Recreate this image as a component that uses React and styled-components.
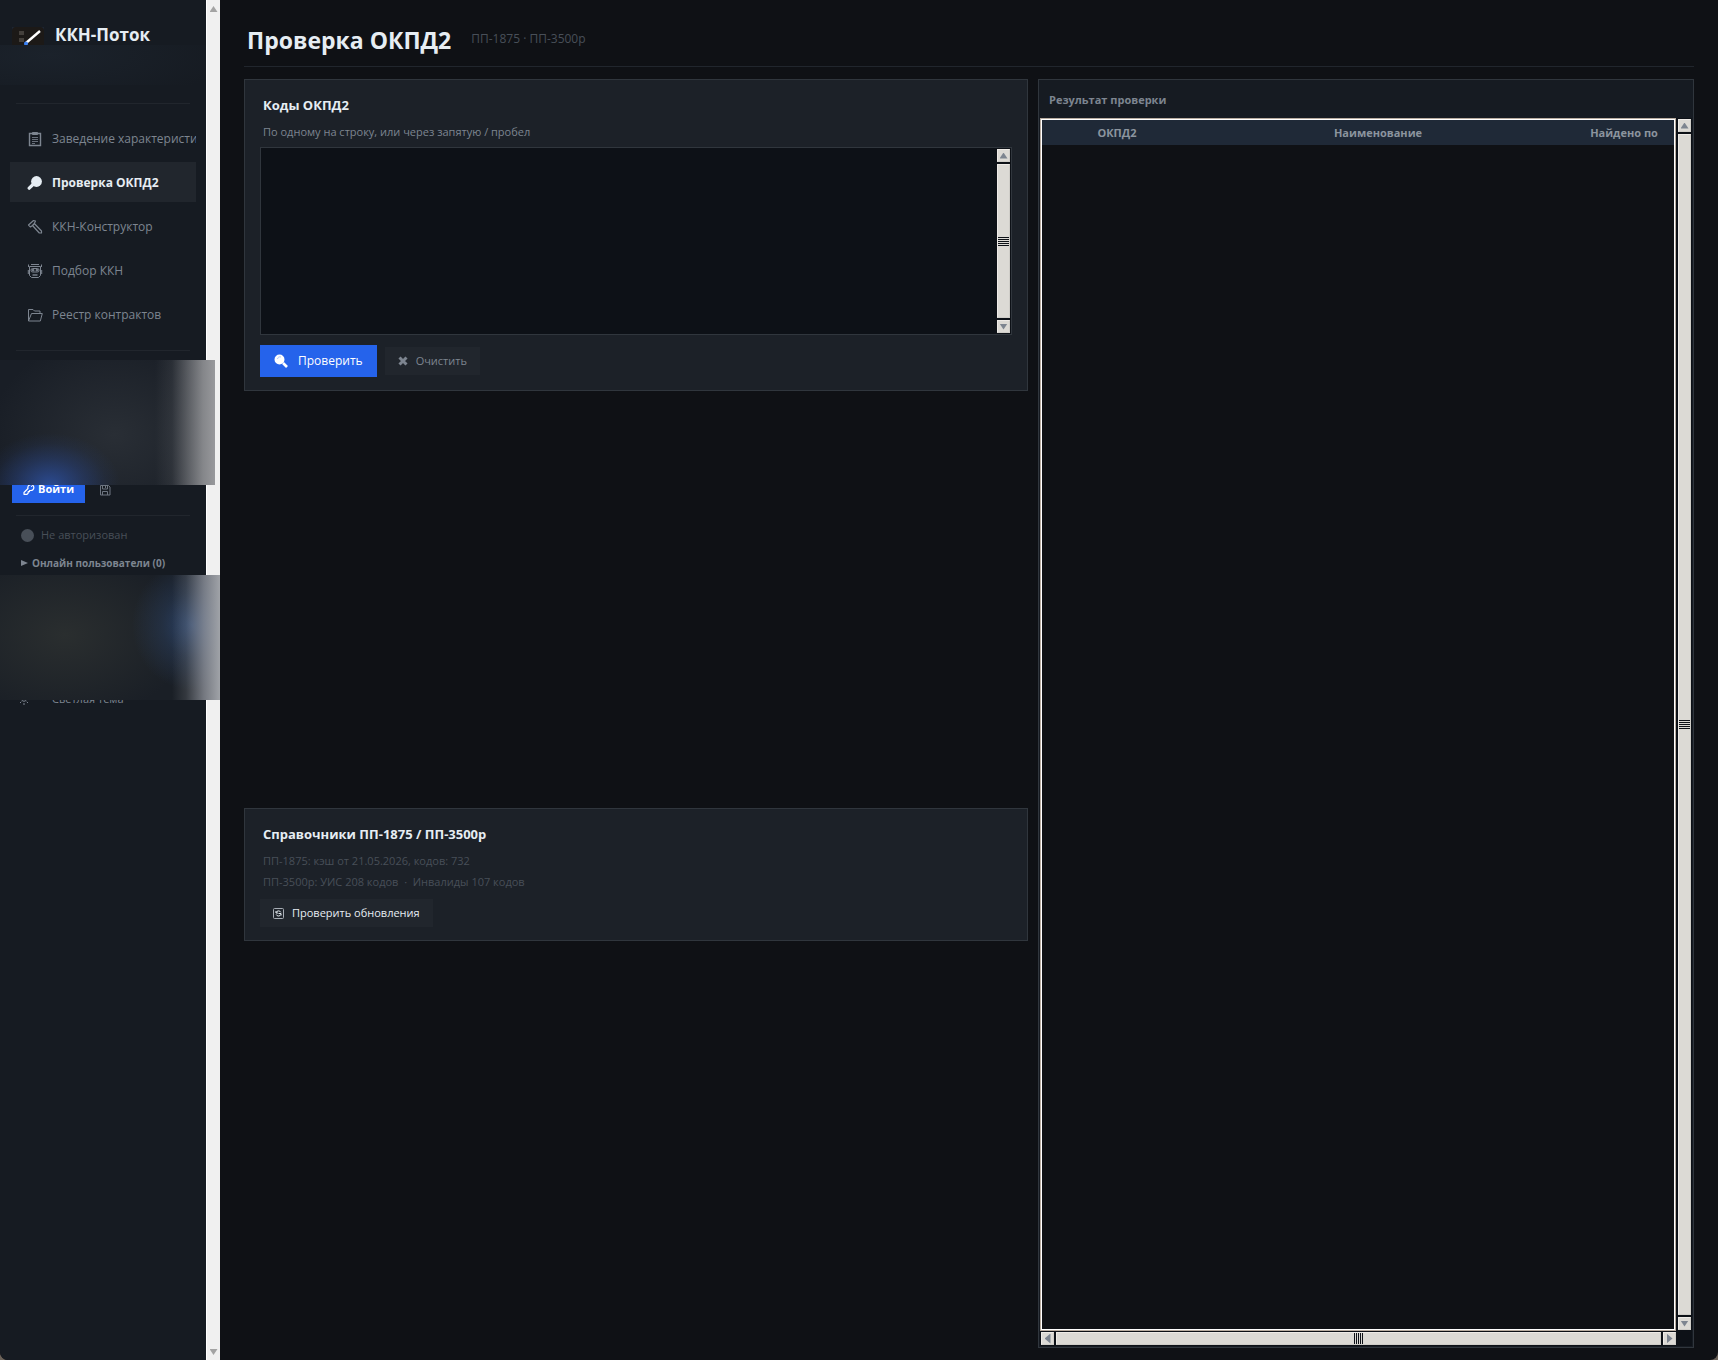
import React, { useState } from 'react'
import styled, { createGlobalStyle, css } from 'styled-components'

const NAV = [
  { id: 'intro', label: 'Заведение характеристик', icon: ClipboardIcon },
  { id: 'okpd', label: 'Проверка ОКПД2', icon: LensIcon },
  { id: 'builder', label: 'ККН-Конструктор', icon: HammerIcon },
  { id: 'pick', label: 'Подбор ККН', icon: RobotIcon },
  { id: 'registry', label: 'Реестр контрактов', icon: FolderIcon },
]

function App() {
  const [page, setPage] = useState('okpd')
  const [codes, setCodes] = useState('')

  return (
    <>
      <GlobalStyle />
      <Window>
        <Sidebar>
          <SidebarContent>
            <Brand>
              <LogoIcon />
              <BrandName>ККН-Поток</BrandName>
              <BrandHaze />
            </Brand>
            <Rule />
            <Nav>
              {NAV.map(({ id, label, icon: Icon }) => (
                <NavItem key={id} $active={page === id} onClick={() => setPage(id)}>
                  <Icon />
                  <span>{label}</span>
                </NavItem>
              ))}
            </Nav>
            <Rule />
            <Account>
              <AccountHaze />
              <LoginRow>
                <LoginButton>
                  <KeyIcon />
                  Войти
                </LoginButton>
                <SaveButton aria-label="Сохранить">
                  <FloppyIcon />
                </SaveButton>
              </LoginRow>
            </Account>
            <Rule />
            <Status>
              <Dot />
              Не авторизован
            </Status>
            <OnlineToggle>
              <PlayIcon />
              Онлайн пользователи (0)
            </OnlineToggle>
            <Footer>
              <FooterHaze />
              <ThemeButton>
                <SunIcon />
                <span>Светлая тема</span>
              </ThemeButton>
            </Footer>
          </SidebarContent>
          <SidebarScroll>
            <Arrow $dir="up" />
            <Arrow $dir="down" />
          </SidebarScroll>
        </Sidebar>

        <Main>
          <Header>
            <Title>Проверка ОКПД2</Title>
            <Subtitle>ПП-1875 · ПП-3500р</Subtitle>
          </Header>
          <Columns>
            <LeftColumn>
              <Cell>
                <Card>
                  <CardTitle as="label" htmlFor="codes">Коды ОКПД2</CardTitle>
                  <Hint>По одному на строку, или через запятую / пробел</Hint>
                  <Editor>
                    <CodesInput id="codes" value={codes} onChange={(e) => setCodes(e.target.value)} />
                    <ScrollBar />
                  </Editor>
                  <Actions>
                    <PrimaryButton>
                      <SearchIcon />
                      Проверить
                    </PrimaryButton>
                    <GhostButton $muted onClick={() => setCodes('')}>
                      <CrossIcon />
                      Очистить
                    </GhostButton>
                  </Actions>
                </Card>
              </Cell>
              <Cell>
                <Card>
                  <CardTitle>Справочники ПП-1875 / ПП-3500р</CardTitle>
                  <Info>ПП-1875: кэш от 21.05.2026, кодов: 732</Info>
                  <Info>ПП-3500р: УИС 208 кодов &nbsp;·&nbsp; Инвалиды 107 кодов</Info>
                  <UpdateRow>
                    <GhostButton>
                      <RefreshIcon />
                      Проверить обновления
                    </GhostButton>
                  </UpdateRow>
                </Card>
              </Cell>
            </LeftColumn>

            <Results>
              <ResultsTitle>Результат проверки</ResultsTitle>
              <ResultsGrid>
                <TableFrame>
                  <Table>
                    <thead>
                      <tr>
                        <Th $width="150px">ОКПД2</Th>
                        <Th>Наименование</Th>
                        <Th $width="110px" $inset="10px">Найдено по</Th>
                      </tr>
                    </thead>
                    <tbody />
                  </Table>
                </TableFrame>
                <ScrollBar />
                <ScrollBar $horizontal />
              </ResultsGrid>
            </Results>
          </Columns>
        </Main>
      </Window>
    </>
  )
}

export default App

function ScrollBar({ $horizontal }) {
  return (
    <Track $horizontal={$horizontal}>
      <ScrollButton>
        <Arrow $dir={$horizontal ? 'left' : 'up'} $color="#7d8590" />
      </ScrollButton>
      <Thumb>
        <Grip $horizontal={$horizontal} />
      </Thumb>
      <ScrollButton>
        <Arrow $dir={$horizontal ? 'right' : 'down'} $color="#7d8590" />
      </ScrollButton>
    </Track>
  )
}

// Icons
function LogoIcon() {
  return (
    <svg width="32" height="18" viewBox="0 0 32 18">
      <rect width="32" height="18" fill="#1d2533" />
      <path d="M4 0h24a4 4 0 0 1 4 4v14H0V4a4 4 0 0 1 4-4z" fill="#1c1917" />
      <path d="M7 4h5v4H7zM7 11h5v4H7z" fill="#44403c" />
      <path d="M14 16 28 4" stroke="#fff" strokeWidth="2.4" />
      <circle cx="14" cy="16.5" r="2" fill="#3b82f6" />
    </svg>
  )
}

function ClipboardIcon() {
  return (
    <svg width="16" height="16" viewBox="0 0 16 16" fill="none" stroke="currentColor">
      <path d="M2.5 2.5h11v12h-11z" strokeWidth="1.4" />
      <path d="M5.5 1.5h5v2h-5z" fill="currentColor" />
      <path d="M5 6.5h6M5 8.5h6M5 10.5h6M5 12.5h3" strokeWidth=".8" />
    </svg>
  )
}

function LensIcon() {
  return (
    <svg width="16" height="16" viewBox="0 0 16 16" fill="currentColor">
      <circle cx="9.500" cy="6.500" r="5.400" />
      <path d="m5.500 10-3.300 3.200" stroke="currentColor" strokeWidth="3.200" strokeLinecap="round" />
    </svg>
  )
}

function HammerIcon() {
  return (
    <svg width="16" height="16" viewBox="0 0 16 16" fill="none" stroke="currentColor" strokeWidth="1.2" strokeLinejoin="round">
      <path d="M1.500 6 6.500 1.500l2 .5-1.200 2.500L14.500 12v2h-2.200L5.500 6.500 3.500 8z" />
      <path d="m5.500 6.500 2-2" />
    </svg>
  )
}

function RobotIcon() {
  return (
    <svg width="16" height="16" viewBox="0 0 16 16" fill="none" stroke="currentColor">
      <path d="M2.500 3.500h11v9l-2 2h-7l-2-2zM1.500 1.500v2.500M14.500 1.500v2.500M4 1.500h8M1.300 7v4M14.700 7v4" />
      <rect x="4" y="5.500" width="8" height="3.500" rx="1.500" />
      <circle cx="6" cy="7.200" r=".9" fill="currentColor" />
      <circle cx="10" cy="7.200" r=".9" fill="currentColor" />
      <path d="M5.500 12h5" strokeWidth="1.400" />
    </svg>
  )
}

function FolderIcon() {
  return (
    <svg width="16" height="16" viewBox="0 0 16 16" fill="none" stroke="currentColor" strokeLinejoin="round">
      <path d="M1.500 14V2.500h4.500L7.500 4H13v2.500M1.500 14 4.500 6.500H15.300L13.300 14z" />
    </svg>
  )
}

function KeyIcon() {
  return (
    <svg width="12" height="12" viewBox="0 0 12 12" fill="none" stroke="currentColor" strokeWidth="1.2" strokeLinejoin="round">
      <path d="M5 5.500A3 3 0 1 1 7.500 7.500L6.500 7.500v1.200H5.200V10L4 11.300H1V9.500z" />
      <circle cx="8.600" cy="3.500" r=".6" fill="currentColor" stroke="none" />
    </svg>
  )
}

function FloppyIcon() {
  return (
    <svg width="12" height="12" viewBox="0 0 12 12" fill="none" stroke="currentColor">
      <path d="M1.500 1.500h8l1.500 1.500v8H1.500zM3.500 1.500V5h5V1.500M3.500 11V7.500h5V11M6.500 2v2" />
    </svg>
  )
}

function PlayIcon() {
  return (
    <svg width="7" height="8" viewBox="0 0 7 8" fill="currentColor">
      <path d="M0 1v6l7-3z" />
    </svg>
  )
}

function SunIcon() {
  return (
    <svg width="12" height="12" viewBox="0 0 12 12" fill="none" stroke="currentColor">
      <circle cx="6" cy="6" r="2.300" />
      <path d="M6 0v2M6 10v2M0 6h2M10 6h2M2 2l1.300 1.300M8.700 8.700 10 10M2 10l1.300-1.300M8.700 3.300 10 2" />
    </svg>
  )
}

function SearchIcon() {
  return (
    <svg width="14" height="14" viewBox="0 0 14 14" fill="none" stroke="currentColor">
      <circle cx="5.500" cy="5.500" r="4" fill="currentColor" strokeWidth="2" />
      <path d="M3.500 5A2.500 2.500 0 0 1 7 3" stroke="#9dbcf8" strokeWidth=".8" />
      <path d="m9 9 4 4" strokeWidth="2.600" />
    </svg>
  )
}

function CrossIcon() {
  return (
    <svg width="10" height="10" viewBox="0 0 10 10" stroke="currentColor" strokeWidth="3">
      <path d="m1.500 1.500 7 7M8.500 1.500l-7 7" />
    </svg>
  )
}

function RefreshIcon() {
  return (
    <svg width="11" height="11" viewBox="0 0 11 11" fill="none" stroke="currentColor">
      <rect x=".5" y=".5" width="10" height="10" rx="1" stroke="#a8aeb6" />
      <path d="M7.800 4.300A2.500 2.500 0 0 0 3.200 4.500M3.200 6.500a2.500 2.500 0 0 0 4.600 0M5.500 5.500h2.500v2M3 3v2h2" />
    </svg>
  )
}

const GlobalStyle = createGlobalStyle`
    * {
      box-sizing: border-box;
    }

    body {
      margin: 0;
      background: #6b6259;
      font-family: "Open Sans", "Noto Sans", sans-serif;
      font-size: 12px;
      line-height: 16px;
      color: #e6edf3;
    }

    button, textarea {
      font: inherit;
      color: inherit;
      border: none;
    }

    button {
      display: flex;
      align-items: center;
      cursor: pointer;
      white-space: nowrap;
    }

    svg {
      flex: none;
    }
`

const Window = styled.div`
    display: flex;
    min-height: 100vh;
    background: #0f1115;
    border-radius: 0 0 8px 8px;
    overflow: hidden;
`

const Sidebar = styled.aside`
    display: flex;
    flex: none;
    width: 220px;
    background: #161b22;
`

const SidebarContent = styled.div`
    flex: 1;
    min-width: 0;
`

const SidebarScroll = styled.div`
    display: flex;
    flex-direction: column;
    justify-content: space-between;
    align-items: center;
    width: 14px;
    padding: 6px 0 5px;
    background: #f0f0f0;
    border-left: 1px solid white;
`

const Arrow = styled.span`
    width: 8px;
    height: 6px;
    background: ${(p) => p.$color || '#a3a3a3'};
    ${(p) => p.$dir === 'up' && css`clip-path: polygon(50% 0, 100% 100%, 0 100%);`}
    ${(p) => p.$dir === 'down' && css`clip-path: polygon(0 0, 100% 0, 50% 100%);`}
    ${(p) => p.$dir === 'left' && css`
      width: 6px;
      height: 10px;
      clip-path: polygon(0 50%, 100% 0, 100% 100%);
    `}
    ${(p) => p.$dir === 'right' && css`
      width: 6px;
      height: 10px;
      clip-path: polygon(0 0, 100% 50%, 0 100%);
    `}
`

const Brand = styled.div`
    position: relative;
    display: flex;
    align-items: flex-start;
    gap: 11px;
    height: 103px;
    padding: 27px 12px 0;
`

const BrandName = styled.div`
    font-size: 17px;
    font-weight: 700;
    line-height: 16px;
`

const Haze = styled.div`
    position: absolute;
    left: 0;
    z-index: 1;
`

const BrandHaze = styled(Haze)`
    top: 45px;
    width: 206px;
    height: 40px;
    background: radial-gradient(ellipse 180px 50px at 50px 10px, #1b222b, #161b22);
`

const AccountHaze = styled(Haze)`
    top: 9px;
    width: 215px;
    height: 125px;
    background:
      linear-gradient(to right, transparent 155px, rgba(151, 152, 155, 0.12) 172px, rgba(151, 152, 155, 0.55) 190px, rgba(151, 152, 155, 0.85) 203px, #98999c 215px),
      radial-gradient(ellipse 70px 52px at 50px 125px, #2b4a90, rgba(42, 70, 136, 0.45) 50%, rgba(42, 70, 136, 0.12) 80%, transparent),
      radial-gradient(ellipse 125px 100px at 115px 75px, #292e35, #191e26);
`

const FooterHaze = styled(Haze)`
    top: 0;
    width: 220px;
    height: 125px;
    background:
      linear-gradient(to right, transparent 172px, rgba(155, 158, 163, 0.2) 186px, rgba(155, 158, 166, 0.7) 204px, #a0a3a8 220px),
      radial-gradient(ellipse 60px 65px at 192px 50px, #2c4368, rgba(44, 67, 104, 0.4) 50%, transparent),
      radial-gradient(ellipse 125px 85px at 65px 60px, #2a2e2f, #1a1f26);
`

const Rule = styled.hr`
    height: 1px;
    margin: 0 16px;
    border: none;
    background: #21262d;
`

const Nav = styled.nav`
    display: flex;
    flex-direction: column;
    gap: 4px;
    padding: 14px 10px 16px;
`

const NavItem = styled.button`
    gap: 9px;
    height: 40px;
    padding: 1px 0 0 17px;
    overflow: hidden;
    background: ${(p) => (p.$active ? '#21262d' : 'transparent')};
    color: ${(p) => (p.$active ? '#e6edf3' : '#7d8590')};
    font-weight: ${(p) => (p.$active ? 700 : 400)};
`

const Account = styled.div`
    position: relative;
    height: 164px;
    padding: 124px 12px 0;
`

const LoginRow = styled.div`
    display: flex;
    gap: 14px;
`

const LoginButton = styled.button`
    gap: 3px;
    height: 28px;
    padding: 0 11px;
    background: #2563eb;
    color: white;
    font-size: 11px;
    font-weight: 700;
`

const SaveButton = styled.button`
    height: 28px;
    padding: 2px 0 0;
    background: transparent;
    color: #6e7681;
`

const Status = styled.div`
    display: flex;
    align-items: center;
    gap: 7px;
    padding: 11px 0 0 21px;
    color: #484f58;
    font-size: 11px;
`

const Dot = styled.span`
    width: 13px;
    height: 13px;
    border-radius: 50%;
    background: #484f58;
`

const OnlineToggle = styled.button`
    gap: 4px;
    height: 32px;
    padding: 8px 0 0 21px;
    background: transparent;
    color: #7d8590;
    font-size: 10px;
    font-weight: 700;
`

const Footer = styled.div`
    position: relative;
    padding-top: 116px;
`

const ThemeButton = styled.button`
    gap: 22px;
    height: 16px;
    padding: 0 0 0 18px;
    background: transparent;
    color: #7d8590;
    font-size: 11px;
`

const Main = styled.main`
    display: flex;
    flex-direction: column;
    flex: 1;
    min-width: 0;
    padding: 0 24px 12px;
`

const Header = styled.header`
    display: flex;
    align-items: center;
    gap: 20px;
    height: 67px;
    margin-bottom: 12px;
    padding: 14px 3px 0;
    border-bottom: 1px solid #21262d;
`

const Title = styled.h1`
    margin: 0;
    font-size: 23px;
    font-weight: 700;
    line-height: 32px;
`

const Subtitle = styled.span`
    padding-bottom: 2px;
    color: #484f58;
`

const Columns = styled.div`
    display: grid;
    grid-template-columns: 784fr 656fr;
    gap: 10px;
    flex: 1;
`

const LeftColumn = styled.div`
    display: flex;
    flex-direction: column;
    gap: 10px;
`

// spare height is shared equally between the two cells
const Cell = styled.div`
    flex: 1 1 auto;
`

const Card = styled.section`
    display: flex;
    flex-direction: column;
    padding: 17px 15px 13px;
    background: #1c2128;
    border: 1px solid #30363d;
`

const CardTitle = styled.h2`
    margin: 0;
    padding: 0 3px;
    font-size: 13px;
    font-weight: 700;
    line-height: 16px;
`

const Hint = styled.p`
    margin: 0;
    padding: 11px 3px 7px;
    color: #7d8590;
    font-size: 11px;
    line-height: 16px;
`

const Editor = styled.div`
    display: flex;
    height: 188px;
    padding: 0 1px;
    background: #0d1117;
    border: 1px solid #30363d;
`

const CodesInput = styled.textarea`
    flex: 1;
    padding: 8px;
    background: transparent;
    outline: none;
    resize: none;
    overflow: hidden;
`

const Track = styled.div`
    display: flex;
    gap: 2px;
    ${(p) => (p.$horizontal ? css`
      height: 13px;
      margin-left: 1px;
    ` : css`
      flex-direction: column;
      width: 13px;
      margin: 1px 0;
    `)}
`

const ScrollButton = styled.span`
    display: flex;
    align-items: center;
    justify-content: center;
    flex: none;
    width: 13px;
    height: 13px;
    background: #dcdad5;
    border: 1px solid;
    border-color: #eeebe7 #cfcdc8 #cfcdc8 #eeebe7;
`

const Thumb = styled.span`
    display: flex;
    align-items: center;
    justify-content: center;
    flex: 1;
    background: #dcdad5;
    border: 1px solid;
    border-color: #eeebe7 #cfcdc8 #cfcdc8 #eeebe7;
`

const Grip = styled.span`
    width: ${(p) => (p.$horizontal ? '9px' : '11px')};
    height: ${(p) => (p.$horizontal ? '11px' : '9px')};
    background: repeating-linear-gradient(${(p) => (p.$horizontal ? 'to right' : 'to bottom')}, #0d1117 0 1px, transparent 1px 2px);
`

const Actions = styled.div`
    display: flex;
    align-items: center;
    gap: 8px;
    padding-top: 10px;
`

const PrimaryButton = styled.button`
    gap: 10px;
    height: 32px;
    padding: 0 14px;
    background: #2563eb;
    color: white;
`

const GhostButton = styled.button`
    gap: 8px;
    height: 28px;
    padding: 0 13px;
    background: #21262d;
    color: ${(p) => (p.$muted ? '#7d8590' : '#e6edf3')};
    font-size: 11px;
`

const Info = styled.p`
    margin: 0;
    padding: 11px 3px 0;
    color: #484f58;
    font-size: 11px;
    line-height: 16px;

    & + & {
      padding-top: 5px;
    }
`

const UpdateRow = styled.div`
    display: flex;
    padding-top: 9px;
`

const Results = styled.section`
    display: flex;
    flex-direction: column;
    padding: 1px;
    background: #161b22;
    border: 1px solid #30363d;
`

const ResultsTitle = styled.h2`
    margin: 0;
    padding: 11px 9px 10px;
    color: #7d8590;
    font-size: 11px;
    font-weight: 700;
    line-height: 16px;
`

const ResultsGrid = styled.div`
    display: grid;
    grid-template-columns: 1fr 13px;
    grid-template-rows: 1fr 13px;
    gap: 1px 2px;
    flex: 1;
    padding: 0 1px 1px 0;
    background: #0d1117;
`

const TableFrame = styled.div`
    background: #0f1115;
    border: 1px solid #b8aca0;
    box-shadow: inset 0 0 0 1px white;
    padding: 1px;
`

const Table = styled.table`
    width: 100%;
    table-layout: fixed;
    border-collapse: collapse;
`

const Th = styled.th`
    width: ${(p) => p.$width || 'auto'};
    height: 25px;
    padding: 0 0 0 ${(p) => p.$inset || '0'};
    background: #1f2937;
    color: #8b949e;
    font-size: 11px;
    font-weight: 700;
`
